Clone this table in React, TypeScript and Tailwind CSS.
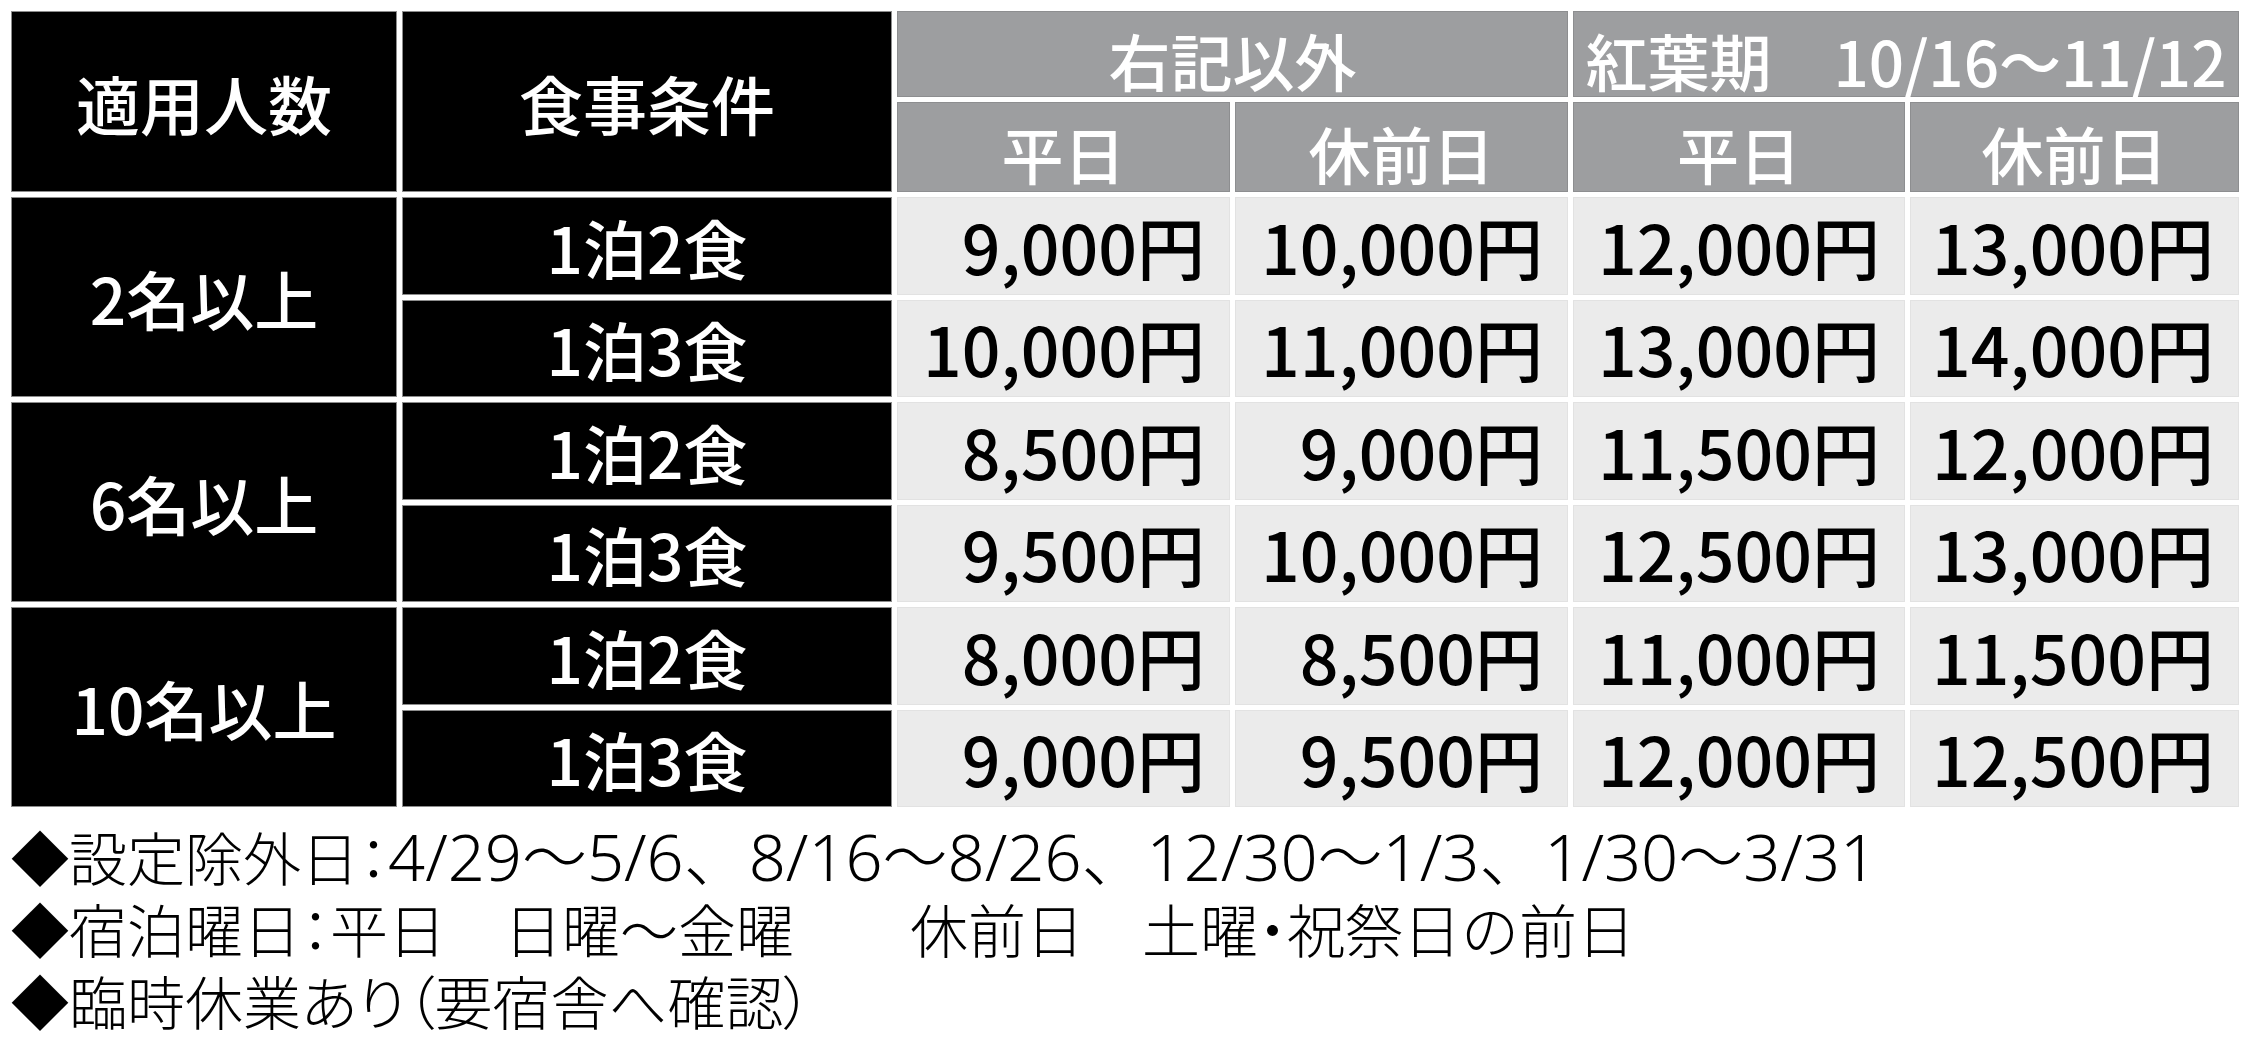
import React from "react";

const groups = [
  {
    label: "2名以上",
    rows: [
      ["1泊2食", "9,000円", "10,000円", "12,000円", "13,000円"],
      ["1泊3食", "10,000円", "11,000円", "13,000円", "14,000円"],
    ],
  },
  {
    label: "6名以上",
    rows: [
      ["1泊2食", "8,500円", "9,000円", "11,500円", "12,000円"],
      ["1泊3食", "9,500円", "10,000円", "12,500円", "13,000円"],
    ],
  },
  {
    label: "10名以上",
    rows: [
      ["1泊2食", "8,000円", "8,500円", "11,000円", "11,500円"],
      ["1泊3食", "9,000円", "9,500円", "12,000円", "12,500円"],
    ],
  },
];

const blackCell =
  "flex items-center justify-center border border-[#8c8c8c] bg-black text-white text-[64px] font-medium leading-none";
const grayCell =
  "flex items-center justify-center border border-[#8d8e90] bg-[#9d9ea0] text-white text-[62px] font-medium leading-none pt-[12px]";
const dataCell =
  "flex items-center justify-end border border-[#e2e2e2] bg-[#ebebeb] text-black text-[68px] font-medium leading-none pr-[24px]";

export default function App() {
  return (
    <div className="min-h-[1053px] w-[2250px] bg-white pl-[11px] pt-[11px] font-['Noto_Sans_CJK_JP',sans-serif]">
      <div className="grid w-[2228px] grid-cols-[386px_490px_333px_333px_332px_329px] grid-rows-[86px_90px_repeat(6,97.5px)] gap-[5px]">
        <div className={`row-span-2 ${blackCell} text-[62px]`}>適用人数</div>
        <div className={`row-span-2 ${blackCell} text-[62px]`}>食事条件</div>
        <div className={`col-span-2 ${grayCell}`}>右記以外</div>
        <div className={`col-span-2 ${grayCell}`}>紅葉期　10/16～11/12</div>
        <div className={grayCell}>平日</div>
        <div className={grayCell}>休前日</div>
        <div className={grayCell}>平日</div>
        <div className={grayCell}>休前日</div>
        {groups.map((g) => (
          <React.Fragment key={g.label}>
            <div className={`row-span-2 ${blackCell}`}>{g.label}</div>
            {g.rows.map((r) => (
              <React.Fragment key={g.label + r[0]}>
                <div className={blackCell}>{r[0]}</div>
                {r.slice(1).map((v, i) => (
                  <div key={i} className={dataCell}>
                    {v}
                  </div>
                ))}
              </React.Fragment>
            ))}
          </React.Fragment>
        ))}
      </div>
      <div className="mt-[13px] text-[58px] font-light leading-[72px] text-black">
        <div className="whitespace-nowrap">
          ◆設定除外日<span className="[font-feature-settings:'palt']">：</span>
          <span className="font-['Noto_Sans','Noto_Sans_CJK_JP',sans-serif] text-[65px] font-light">
            4/29～5/6、8/16～8/26、12/30～1/3、1/30～3/31
          </span>
        </div>
        <div className="whitespace-nowrap">
          ◆宿泊曜日<span className="[font-feature-settings:'palt']">：</span>平日　日曜～金曜　　休前日　土曜
          <span className="[font-feature-settings:'palt']">・</span>祝祭日の前日
        </div>
        <div className="whitespace-nowrap">
          ◆<span className="[font-feature-settings:'palt']">臨時休業あり（要宿舎へ確認）</span>
        </div>
      </div>
    </div>
  );
}
